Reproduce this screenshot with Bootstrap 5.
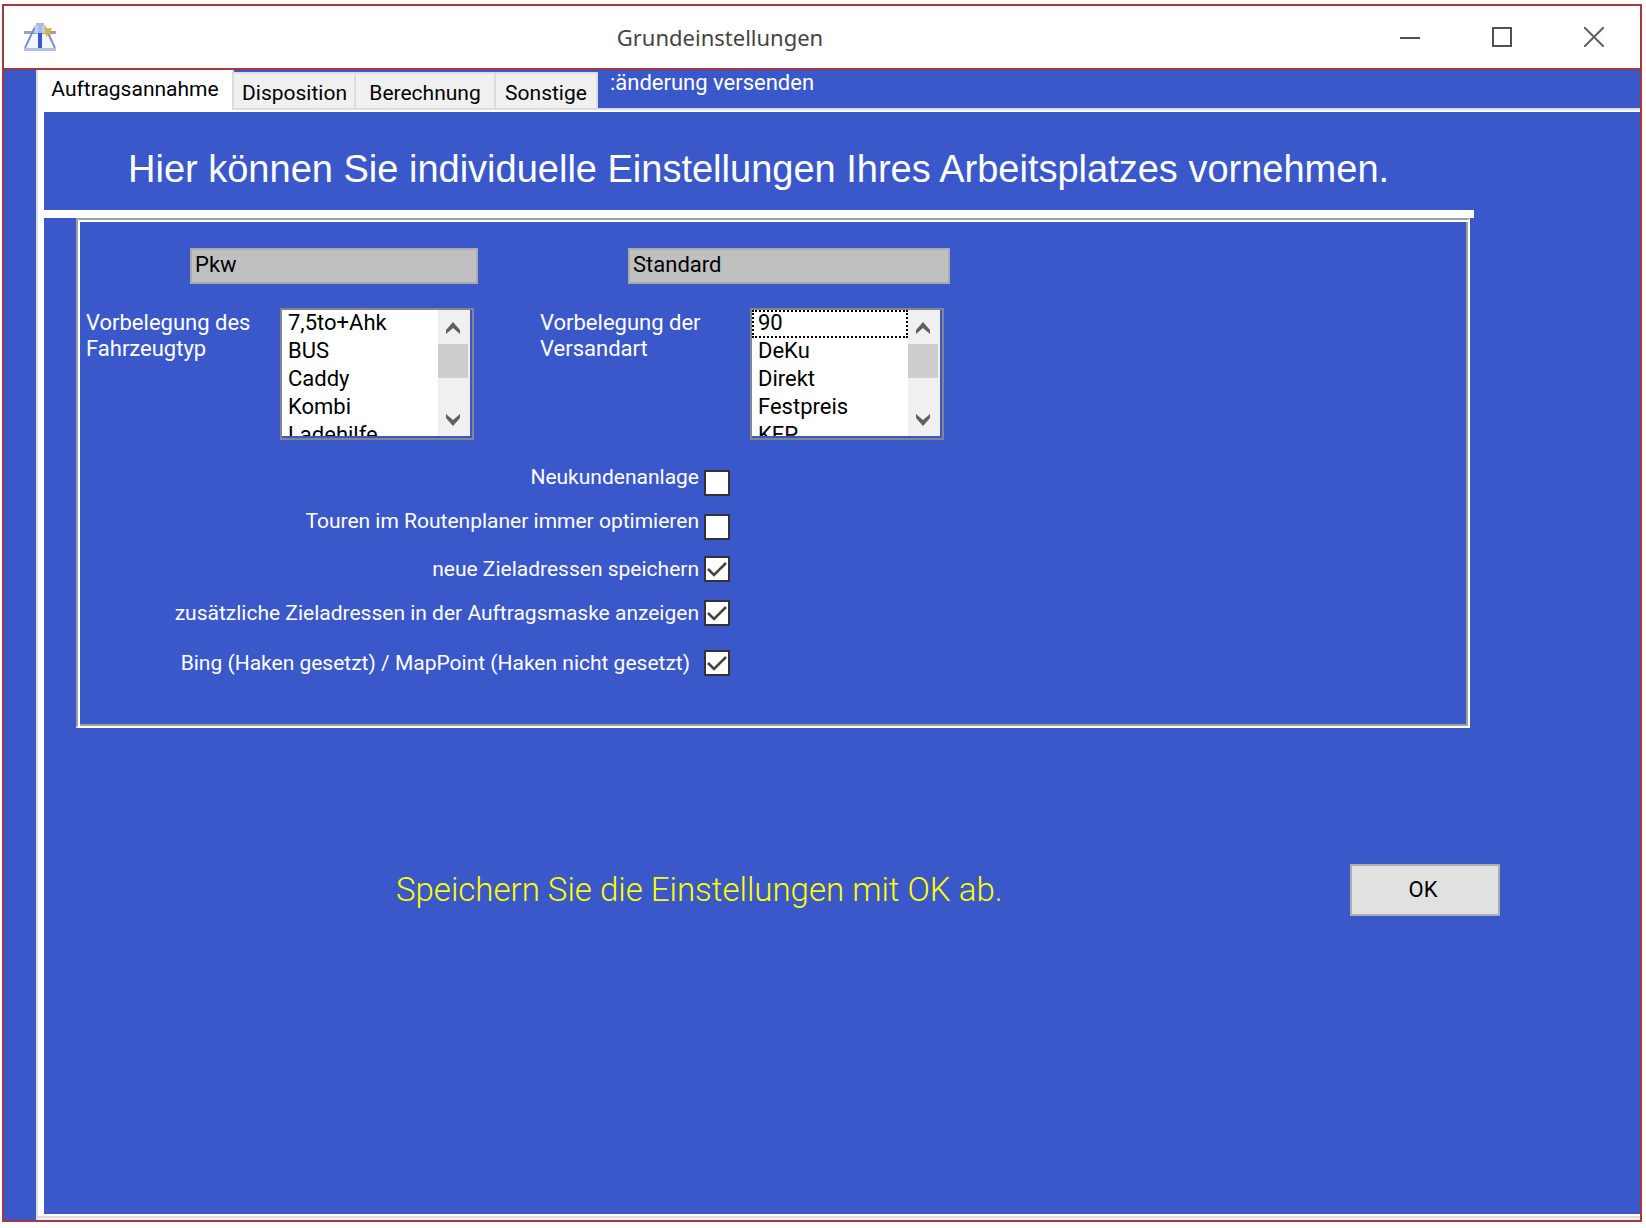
<!DOCTYPE html>
<html lang="de">
<head>
<meta charset="utf-8">
<meta name="viewport" content="width=device-width, initial-scale=1">
<title>Grundeinstellungen</title>
<link rel="stylesheet" href="https://cdn.jsdelivr.net/npm/bootstrap@5.3.0/dist/css/bootstrap.min.css">
<style>
  :root { --blue: #3a58ca; --frame: #a6373c; --edge: #dcdcdc; --face: #f0f0f0; }
  body { background: #fff; font: 400 22px/26px Roboto, "Liberation Sans", sans-serif; color: #fff; padding: 4px 4px 6px 2px; }
  .app-window { border: 2px solid var(--frame); min-height: calc(100vh - 10px); background: var(--blue); }
  .titlebar { height: 64px; background: #fff; border-bottom: 2px solid var(--frame); color: #444; }
  .app-icon { width: 72px; padding-left: 20px; }
  .app-title { font: 400 22px/28px "Noto Sans", "Open Sans", sans-serif; }
  .caption-btn { width: 92px; height: 62px; border: 0; background: none; padding: 0; }
  .caption-btn svg { display: block; margin: auto; }

  .tab-host { margin-left: 32px; border-left: 2px solid var(--edge); }
  .tab-strip { height: 40px; border-bottom: 2px solid var(--edge); }
  .tab-strip .nav-item { display: flex; }
  .tab-strip .tab-btn { border: 2px solid var(--edge); border-left: 0; border-bottom: 0; background: var(--face); color: #000; height: 36px; margin-top: 2px; padding: 4px 8px 0; border-radius: 0; font-size: 21px; line-height: 26px; width: 140px; text-align: center; }
  .tab-strip .tab-btn.active { height: 40px; margin-top: 0; margin-bottom: -2px; border-top: 0; background: #fff; padding: 0 8px 2px; width: 196px; }
  .tab-strip .tab-narrow { width: 122px; }
  .tab-strip .tab-wide { width: 102px; }
  .strip-note { padding-left: 12px; line-height: 26px; }
  .tab-page { border-left: 6px solid #fff; border-top: 2px solid #fff; border-bottom: 2px solid #fff; box-shadow: 0 2px 0 var(--edge), 0 4px 0 var(--face); margin-bottom: 4px; }

  .headline { font: 400 38px/48px "Liberation Sans", Arial, sans-serif; padding: 33px 84px 17px; margin: 0; }
  .rule { height: 8px; background: #fff; margin-right: 166px; }
  .group-frame { margin: 0 170px 0 32px; border: 2px solid #fff; border-top-color: #a0a0a0; border-left-color: #a0a0a0; box-shadow: inset 2px 2px 0 #fff, inset -2px -2px 0 #a0a0a0; padding: 28px 8px 50px; }
  .readonly-box { display: block; height: 36px; border: 2px solid #ababab; background: #c0c0c0; color: #000; padding: 0 3px 4px; border-radius: 0; outline: 0; }
  .col-a { width: 454px; }
  .col-a .readonly-box { width: 288px; margin-left: 104px; }
  .col-b .readonly-box { width: 322px; margin-left: 88px; }
  .list-row { margin-top: 24px; }
  .list-label { width: 194px; padding-top: 2px; }
  .col-b .list-label { width: 210px; }
  .list-frame { width: 194px; height: 132px; border: 2px solid #868686; padding: 0 2px 2px 0; }
  .list-frame select { width: 156px; height: 126px; border: 0; border-radius: 0; background: #fff; color: #000; padding: 0; outline: 0; overflow-y: hidden; font: inherit; }
  .list-frame option { height: 28px; line-height: 28px; min-height: 28px; padding: 0 0 0 6px; }
  .list-frame option.focus-row { outline: 2px dotted #000; outline-offset: -2px; }
  .scroll-track { width: 32px; background: var(--face); }
  .scroll-track button { width: 30px; height: 34px; border: 0; padding: 0; background: none; }
  .scroll-thumb { width: 30px; height: 34px; background: #cdcdcd; }

  .checks { width: 644px; margin-top: 24px; }
  .check-row { gap: 5px; font-size: 21px; }
  .check-tall { height: 32px; }
  .check-wide { gap: 14px; }
  .space-s { margin-bottom: 12px; }
  .space-m { margin-bottom: 16px; }
  .space-l { margin-bottom: 18px; }
  .space-xl { margin-bottom: 24px; }
  .tick { appearance: none; width: 26px; height: 26px; margin: 0; border: 2px solid #333; background: #fff; flex: none; }
  .tick:checked { background: #fff url("data:image/svg+xml,%3Csvg xmlns='http://www.w3.org/2000/svg' viewBox='0 0 22 22'%3E%3Cpath d='M2 11l6 6L20 5' fill='none' stroke='%23444' stroke-width='2.6'/%3E%3C/svg%3E") center/22px no-repeat; }
  .save-area { margin: 136px 140px 0 346px; }
  .save-hint { color: #ff0; font: 300 33px/40px Roboto, "Liberation Sans", sans-serif; margin: 0; padding-left: 6px; }
  .ok-btn { width: 150px; height: 52px; border: 2px solid #adadad; border-radius: 0; background: #e1e1e1; color: #000; font: inherit; padding: 0 4px 0 0; }
</style>
<script src="https://cdn.jsdelivr.net/npm/bootstrap@5.3.0/dist/js/bootstrap.bundle.min.js"></script>
</head>
<body>
<div class="app-window d-flex flex-column">
  <header class="titlebar d-flex align-items-center">
    <div class="app-icon">
      <svg width="32" height="28" viewBox="0 0 16 14" aria-hidden="true">
        <path d="M5 4h6l4.500 9h-15z" fill="#f4f6fd"/>
        <path d="M0 4h16v1.500H0z" fill="#98a3bf"/>
        <path d="M6 0h4v1h1v4H5V1h1z" fill="#c3cdee"/>
        <path d="M6 0h4v1H6z" fill="#b3b9c6"/>
        <path d="M5.200 2.500L.5 12.500M10.800 2.500l4.700 10" stroke="#7488c6" stroke-width=".9" fill="none"/>
        <path d="M7 1h2v4H7z" fill="#a9b9ec"/>
        <path d="M7 5h2v8H7z" fill="#3a58ca"/>
        <path d="M0 12.500h16V14H0z" fill="#b4bfe2"/>
        <path d="M10 2l1.500.7L14 2.500 13.300 4.500 14 6l-1.800-.3L11 7l-.2-2z" fill="#d3b53c"/>
      </svg>
    </div>
    <div class="app-title flex-fill text-center">Grundeinstellungen</div>
    <button class="caption-btn" type="button" aria-label="Minimieren"><svg width="20" height="20"><path d="M0 11h20" stroke="#505050" stroke-width="2"/></svg></button>
    <button class="caption-btn" type="button" aria-label="Maximieren"><svg width="20" height="20"><path d="M1 1h18v18H1z" fill="none" stroke="#505050" stroke-width="2"/></svg></button>
    <button class="caption-btn" type="button" aria-label="Schließen"><svg width="20" height="20"><path d="M0 0l20 20M20 0L0 20" stroke="#606060" stroke-width="2"/></svg></button>
  </header>

  <main class="tab-host flex-fill d-flex flex-column">
    <div class="tab-strip d-flex">
      <ul class="nav flex-nowrap" role="tablist">
        <li class="nav-item"><button class="tab-btn active" role="tab" type="button">Auftragsannahme</button></li>
        <li class="nav-item"><button class="tab-btn tab-narrow" role="tab" type="button">Disposition</button></li>
        <li class="nav-item"><button class="tab-btn" role="tab" type="button">Berechnung</button></li>
        <li class="nav-item"><button class="tab-btn tab-wide" role="tab" type="button">Sonstige</button></li>
      </ul>
      <div class="strip-note">:änderung versenden</div>
    </div>
    <section class="tab-page flex-fill">
      <h1 class="headline">Hier können Sie individuelle Einstellungen Ihres Arbeitsplatzes vornehmen.</h1>
      <div class="rule"></div>
      <form class="group-frame">
        <div class="d-flex">
          <div class="col-a">
            <input class="readonly-box" id="vehicle" type="text" value="Pkw" readonly aria-label="Fahrzeugtyp">
            <div class="d-flex list-row">
              <label class="list-label" for="vehicleList">Vorbelegung des<br>Fahrzeugtyp</label>
              <div class="list-frame d-flex">
                <select id="vehicleList" size="4"><option>7,5to+Ahk</option><option>BUS</option><option>Caddy</option><option>Kombi</option><option>Ladehilfe</option></select>
                <div class="scroll-track d-flex flex-column">
                  <button type="button" aria-label="Nach oben"><svg width="14" height="12"><path d="M0 8l7-8 7 8v4L7 6l-7 6z" fill="#606060"/></svg></button>
                  <div class="scroll-thumb"></div>
                  <button class="mt-auto" type="button" aria-label="Nach unten"><svg width="14" height="12"><path d="M0 4l7 8 7-8V0L7 6 0 0z" fill="#606060"/></svg></button>
                </div>
              </div>
            </div>
          </div>
          <div class="col-b">
            <input class="readonly-box" id="shipping" type="text" value="Standard" readonly aria-label="Versandart">
            <div class="d-flex list-row">
              <label class="list-label" for="shippingList">Vorbelegung der<br>Versandart</label>
              <div class="list-frame d-flex">
                <select id="shippingList" size="4"><option class="focus-row">90</option><option>DeKu</option><option>Direkt</option><option>Festpreis</option><option>KEP</option></select>
                <div class="scroll-track d-flex flex-column">
                  <button type="button" aria-label="Nach oben"><svg width="14" height="12"><path d="M0 8l7-8 7 8v4L7 6l-7 6z" fill="#606060"/></svg></button>
                  <div class="scroll-thumb"></div>
                  <button class="mt-auto" type="button" aria-label="Nach unten"><svg width="14" height="12"><path d="M0 4l7 8 7-8V0L7 6 0 0z" fill="#606060"/></svg></button>
                </div>
              </div>
            </div>
          </div>
        </div>
        <div class="checks">
          <div class="check-row check-tall space-s d-flex justify-content-end"><label for="c1">Neukundenanlage</label><input class="tick align-self-end" id="c1" type="checkbox"></div>
          <div class="check-row check-tall space-m d-flex justify-content-end"><label for="c2">Touren im Routenplaner immer optimieren</label><input class="tick align-self-end" id="c2" type="checkbox"></div>
          <div class="check-row space-l d-flex justify-content-end"><label for="c3">neue Zieladressen speichern</label><input class="tick" id="c3" type="checkbox" checked></div>
          <div class="check-row space-xl d-flex justify-content-end"><label for="c4">zusätzliche Zieladressen in der Auftragsmaske anzeigen</label><input class="tick" id="c4" type="checkbox" checked></div>
          <div class="check-row check-wide d-flex justify-content-end"><label for="c5">Bing (Haken gesetzt) / MapPoint (Haken nicht gesetzt)</label><input class="tick" id="c5" type="checkbox" checked></div>
        </div>
      </form>
      <div class="save-area d-flex align-items-center justify-content-between">
        <p class="save-hint">Speichern Sie die Einstellungen mit OK ab.</p>
        <button class="ok-btn" type="button">OK</button>
      </div>
    </section>
  </main>
</div>
</body>
</html>
